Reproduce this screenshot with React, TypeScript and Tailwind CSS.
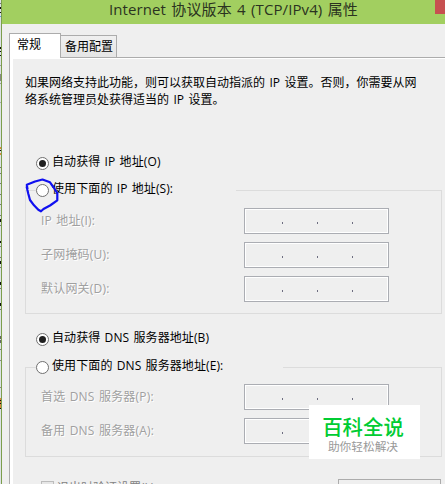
import clsx from 'clsx';

interface RadioProps {
  label: string;
  checked?: boolean;
  className?: string;
}

function Radio({ label, checked, className }: RadioProps) {
  return (
    <label className={clsx('flex h-[14px] items-center tracking-[0.1px] [word-spacing:1px]', className)}>
      <span className="flex size-[13px] shrink-0 items-center justify-center rounded-full border border-[#707070] bg-white">
        {checked && <span className="size-[7px] rounded-full bg-[#202020]" />}
      </span>
      <span className="-mt-[3px] ml-[3px] whitespace-nowrap">{label}</span>
    </label>
  );
}

function AddressRow({ label }: { label: string }) {
  return (
    <div className="flex h-[26px] items-center">
      <span className="-mt-[2px] w-[203px] shrink-0 whitespace-nowrap tracking-[0.2px] text-[#a0a0a0] [text-shadow:1px_1px_0_#fff] [word-spacing:1px]">
        {label}
      </span>
      <div className="flex h-[26px] w-[145px] gap-[34px] border border-[#abadb3] pl-[37px] pt-[13px] outline-1 -outline-offset-2 outline-white">
        <i className="h-[2px] w-px bg-[#6d6d80]" />
        <i className="h-[2px] w-px bg-[#6d6d80]" />
        <i className="h-[2px] w-px bg-[#6d6d80]" />
      </div>
    </div>
  );
}

// Slice of the window behind the dialog
const specks = [
  { top: 3, height: 1, color: '#777' },
  { top: 7, height: 2, color: '#111' },
  { top: 12, height: 1, color: '#111' },
  { top: 16, height: 1, color: '#5aa0d8' },
  { top: 47, height: 2, color: '#111' },
  { top: 51, height: 1, color: '#111' },
  { top: 55, height: 1, color: '#111' },
  { top: 65, height: 1, color: '#999' },
  { top: 74, height: 7, color: '#888' },
  { top: 83, height: 1, color: '#999' },
  { top: 102, height: 1, color: '#aaa' },
  { top: 147, height: 2, color: '#d88a3c' },
  { top: 150, height: 1, color: '#111' },
  { top: 153, height: 2, color: '#d88a3c' },
  { top: 167, height: 1, color: '#777' },
  { top: 173, height: 1, color: '#777' },
  { top: 183, height: 1, color: '#777' },
  { top: 194, height: 1, color: '#777' },
  { top: 204, height: 1, color: '#777' },
  { top: 215, height: 1, color: '#777' },
  { top: 219, height: 3, color: '#111' },
  { top: 225, height: 1, color: '#777' },
  { top: 241, height: 2, color: '#111' },
  { top: 246, height: 1, color: '#777' },
  { top: 257, height: 1, color: '#777' },
  { top: 261, height: 3, color: '#111' },
  { top: 267, height: 1, color: '#777' },
  { top: 282, height: 3, color: '#111' },
  { top: 288, height: 1, color: '#777' },
  { top: 303, height: 3, color: '#111' },
  { top: 309, height: 1, color: '#777' },
  { top: 336, height: 3, color: '#666' },
  { top: 340, height: 3, color: '#666' },
  { top: 349, height: 1, color: '#777' },
  { top: 360, height: 1, color: '#888' },
  { top: 387, height: 1, color: '#888' },
  { top: 398, height: 10, color: '#d88a3c' },
  { top: 400, height: 1, color: '#111' },
  { top: 403, height: 1, color: '#111' },
  { top: 408, height: 1, color: '#111' },
];

export default function App() {
  return (
    <div className="relative flex h-[484px] w-[445px] overflow-hidden bg-[#efefef] font-['Open_Sans','Noto_Sans_CJK_SC',sans-serif] text-[12px] leading-[17px] text-black">
      <div className="relative w-px shrink-0 bg-[#dde2e6]">
        {specks.map((s) => (
          <i key={s.top} className="absolute left-0 w-px" style={{ top: s.top, height: s.height, background: s.color }} />
        ))}
      </div>
      <div className="w-px shrink-0 bg-[#7c9e4c]" />

      <main className="w-[443px] shrink-0">
        <header className="flex h-6 items-start justify-between bg-[#a2cf60]">
          <h1 className="ml-[107px] mt-[-1px] whitespace-nowrap text-[15px] leading-[20px] tracking-[0.1px] text-[#2b3320] [word-spacing:1.3px]">
            Internet 协议版本 4 (TCP/IPv4) 属性
          </h1>
          <div className="h-[14px] w-[10px] bg-[#c75050]" />
        </header>

        <nav className="mt-[9px] flex h-[25px] items-end pl-[7px]">
          <div className="h-[25px] w-[52px] border border-b-0 border-[#acacac] bg-white pl-[7px] pt-[2px]">常规</div>
          <div className="flex h-[25px] grow items-end border-b border-[#acacac]">
            <div className="h-[22px] w-[56px] border border-b-0 border-l-0 border-[#acacac] bg-linear-to-b from-[#f0f0f0] to-[#e5e5e5] pl-[4px] pt-[2px]">
              备用配置
            </div>
          </div>
        </nav>

        <section className="ml-[7px] h-[426px] border-l border-[#acacac] bg-white pl-[3px] pt-px">
          <div className="h-[425px] bg-[#efefef] pl-[12px] pt-[15px]">
            <p className="h-[34px] whitespace-nowrap [word-spacing:1.3px]">
              如果网络支持此功能，则可以获取自动指派的 IP 设置。否则，你需要从网
              <br />
              络系统管理员处获得适当的 IP 设置。
            </p>

            <Radio label="自动获得 IP 地址(O)" checked className="ml-[11px] mt-[48px]" />
            <div className="mt-[20px] h-[124px] w-[417px] border border-[#dcdcdc] pl-[15px]">
              <Radio label="使用下面的 IP 地址(S):" className="-ml-[5px] -mt-[8px] w-[200px] bg-[#efefef]" />
              <div className="mt-[11px] flex flex-col gap-2">
                <AddressRow label="IP 地址(I):" />
                <AddressRow label="子网掩码(U):" />
                <AddressRow label="默认网关(D):" />
              </div>
            </div>

            <Radio label="自动获得 DNS 服务器地址(B)" checked className="ml-[11px] mt-[18px]" />
            <div className="mt-[21px] h-[90px] w-[417px] border border-[#dcdcdc] pl-[15px]">
              <Radio label="使用下面的 DNS 服务器地址(E):" className="-ml-[5px] -mt-[8px] w-[247px] bg-[#efefef]" />
              <div className="mt-[10px] flex flex-col gap-2">
                <AddressRow label="首选 DNS 服务器(P):" />
                <AddressRow label="备用 DNS 服务器(A):" />
              </div>
            </div>

            <div className="mt-[22px] flex h-[5px] items-start overflow-hidden pl-4 text-[#838383]">
              <span className="mt-[2px] size-[13px] shrink-0 border border-[#bcbcbc] bg-[#e6e6e6]" />
              <span className="ml-[3px] whitespace-nowrap">退出时验证设置(L)</span>
              <span className="ml-auto mr-[4px] h-[22px] w-[103px] shrink-0 border border-[#acacac]" />
            </div>
          </div>
        </section>
      </main>

      {/* Hand-drawn circle around the manual IP option */}
      <svg className="absolute left-[24px] top-[176px]" width="36" height="38" viewBox="0 0 36 38" fill="none" stroke="#1010f0" strokeWidth="2.2" strokeLinecap="round" strokeLinejoin="round">
        <path d="M3.5 13 L2.8 8.7 L11 5.5 L18.5 3.5 L26 6.3 L29.3 11 L33.3 17 L33.3 24.3 L26 29.5 L19.5 33 L17 35.3 L14.3 33.7 L10 29.3 L6 24 L4.3 17.7 L2.7 11" />
      </svg>

      <aside className="absolute left-[309px] top-[405px] flex h-[54px] w-[111px] flex-col items-center bg-white pr-[3px] font-['Noto_Sans_CJK_SC',sans-serif]">
        <strong className="mt-[8px] text-[20.4px] leading-[26px] font-medium text-[#00cc33]">百科全说</strong>
        <span className="text-[11.7px] leading-[13px] text-[#999]">助你轻松解决</span>
      </aside>
    </div>
  );
}
